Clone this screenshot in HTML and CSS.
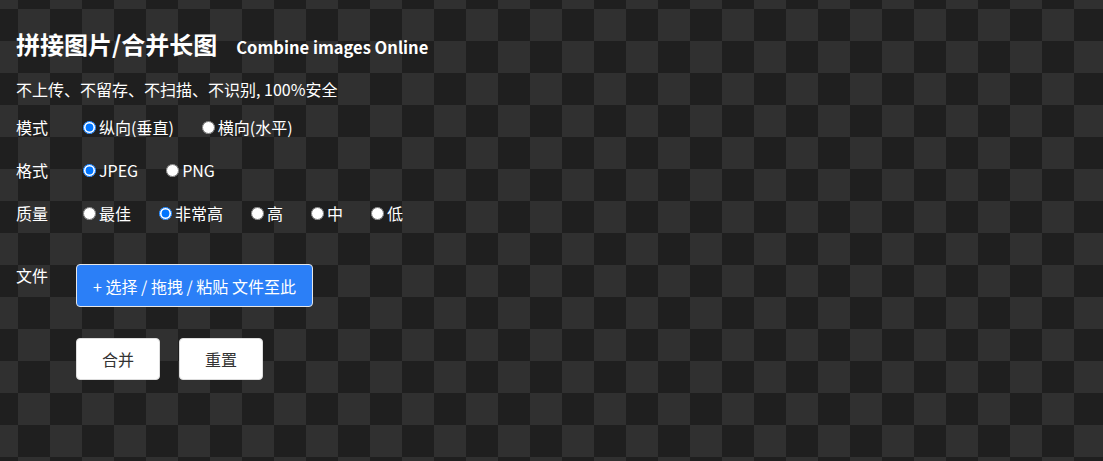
FILE: index.html
```html
<!DOCTYPE html>
<html lang="zh-CN">
<head>
  <meta charset="UTF-8">
  <title>拼接图片/合并长图</title>
  <link rel="stylesheet" href="styles.css">
</head>
<body>
  <div class="header">
    <h1>拼接图片/合并长图</h1>
    <span class="subtitle-en">Combine images Online</span>
  </div>
  <p class="notice">不上传、不留存、不扫描、不识别, 100%安全</p>

  <form id="combineForm">
    <div class="row">
      <div class="row-label">模式</div>
      <div class="row-body">
        <label class="option"><input type="radio" name="mode" value="v" checked>纵向(垂直)</label>
        <label class="option"><input type="radio" name="mode" value="h">横向(水平)</label>
      </div>
    </div>

    <div class="row">
      <div class="row-label">格式</div>
      <div class="row-body">
        <label class="option"><input type="radio" name="format" value="jpeg" checked>JPEG</label>
        <label class="option"><input type="radio" name="format" value="png">PNG</label>
      </div>
    </div>

    <div class="row">
      <div class="row-label">质量</div>
      <div class="row-body">
        <label class="option"><input type="radio" name="quality" value="1">最佳</label>
        <label class="option"><input type="radio" name="quality" value="0.92" checked>非常高</label>
        <label class="option"><input type="radio" name="quality" value="0.8">高</label>
        <label class="option"><input type="radio" name="quality" value="0.6">中</label>
        <label class="option"><input type="radio" name="quality" value="0.4">低</label>
      </div>
    </div>

    <div class="row row-file">
      <div class="row-label">文件</div>
      <div class="row-body">
        <button type="button" class="btn-file">+ 选择 / 拖拽 / 粘贴 文件至此</button>
      </div>
    </div>

    <div class="actions">
      <button type="button" class="btn">合并</button>
      <button type="reset" class="btn">重置</button>
    </div>
  </form>
</body>
</html>
```

FILE: styles.css
```css
html {
  background-color: #1f1f1f;
  background-image: conic-gradient(#1f1f1f 25%, #303030 0 50%, #1f1f1f 0 75%, #303030 0);
  background-size: 64px 64px;
  background-position: 18px 9px;
  min-height: 100%;
}

body {
  font-family: "Noto Sans CJK SC", "Noto Sans", sans-serif;
  margin: 0;
  padding: 29px 16px 16px;
  color: #ffffff;
  font-size: 16px;
}

.header {
  display: flex;
  align-items: baseline;
  gap: 19px;
  height: 30px;
}

h1 {
  margin: 0;
  font-size: 24px;
  line-height: 30px;
  font-weight: bold;
}

.subtitle-en {
  font-size: 16.5px;
  font-weight: bold;
}

.notice {
  margin: 19px 0 16px;
  line-height: 22px;
}

.row {
  display: flex;
  align-items: flex-start;
  margin-bottom: 21px;
}

.row-label {
  width: 60px;
  line-height: 22px;
}

.row-body {
  display: flex;
  align-items: center;
  line-height: 22px;
}

.option {
  display: flex;
  align-items: center;
  margin-left: 2px;
  margin-right: 21px;
}

.option input {
  margin: 0 3px 0 5px;
}

.row-file {
  margin-top: 40px;
  margin-bottom: 31px;
}

.btn-file {
  font-family: inherit;
  font-size: 16px;
  color: #ffffff;
  background-color: #2b7ff7;
  border: 1px solid #e6e6e6;
  border-radius: 4px;
  height: 43px;
  padding: 0 16px;
  cursor: pointer;
}

.actions {
  display: flex;
  gap: 19px;
  margin-left: 60px;
}

.btn {
  font-family: inherit;
  font-size: 16px;
  color: #333333;
  background-color: #ffffff;
  border: 1px solid #dddddd;
  border-radius: 4px;
  width: 84px;
  height: 42px;
  cursor: pointer;
}
```
